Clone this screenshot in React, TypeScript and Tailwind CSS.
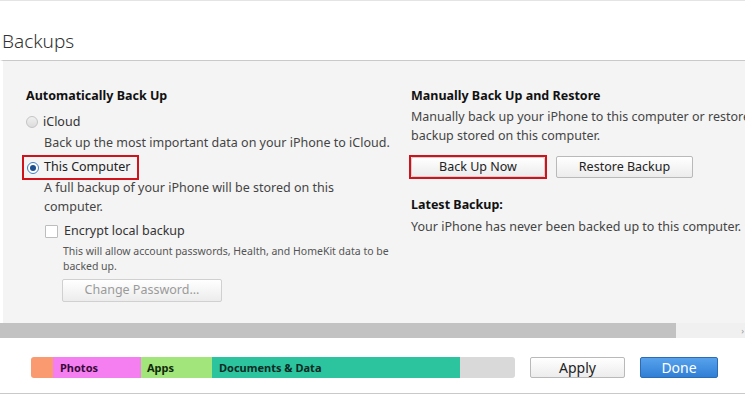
import React from 'react';

const font = { fontFamily: '"Noto Sans", "Open Sans", Arial, sans-serif' };

const Radio = ({ checked }: { checked?: boolean }) => (
  <span
    className={`inline-flex w-[12px] h-[12px] rounded-full border items-center justify-center ${
      checked ? 'border-[#3b7fc4] bg-white' : 'border-[#c4c4c4] bg-gradient-to-b from-[#f0f0f0] to-[#dcdcdc]'
    }`}
  >
    {checked && <span className="w-[6px] h-[6px] rounded-full bg-[#1c4f8f]" />}
  </span>
);

const Btn = ({ label, dim, className = '' }: { label: string; dim?: boolean; className?: string }) => (
  <div
    className={`flex items-center justify-center border rounded-[2px] bg-gradient-to-b from-[#ffffff] to-[#ececec] text-[12.5px] ${
      dim ? 'text-[#9a9a9a] border-[#d0d0d0]' : 'text-[#222] border-[#b9b9b9]'
    } ${className}`}
  >
    {label}
  </div>
);

export default function App() {
  return (
    <div className="w-[745px] h-[394px] bg-white overflow-hidden flex flex-col border-t border-[#e4e4e4]" style={font}>
      {/* title */}
      <div className="h-[59px] pl-[2px] pt-[28px] text-[19px] leading-[24px] text-[#333] font-light">Backups</div>

      {/* panel */}
      <div className="h-[263px] bg-[#f4f4f4] border-t border-[#c9c9c9] border-l-[3px] border-l-white flex text-[12.5px] text-[#444] whitespace-nowrap">
        <div className="w-[382px] shrink-0 pl-[23px] pt-[27px] flex flex-col">
          <div className="font-bold text-[#111] leading-[16px]">Automatically Back Up</div>
          <div className="flex items-center gap-[5px] mt-[10px] h-[16px]">
            <Radio />
            <span className="text-[#333]">iCloud</span>
          </div>
          <div className="pl-[18px] mt-[4px] leading-[18px]">Back up the most important data on your iPhone to iCloud.</div>
          <div className="mt-[3px] -ml-[4px] w-[117px] h-[25px] border-2 border-[#d0121b] flex items-center gap-[5px] pl-[3px]">
            <Radio checked />
            <span className="text-[#222]">This Computer</span>
          </div>
          <div className="pl-[18px] -mt-[2px] leading-[19px]">
            A full backup of your iPhone will be stored on this
            <br />
            computer.
          </div>
          <div className="flex items-center gap-[6px] pl-[19px] mt-[8px] h-[14px]">
            <span className="w-[13px] h-[13px] border border-[#bdbdbd] bg-white rounded-[1px]" />
            <span className="text-[#333]">Encrypt local backup</span>
          </div>
          <div className="pl-[37px] mt-[6px] text-[10.5px] leading-[15px] text-[#555]">
            This will allow account passwords, Health, and HomeKit data to be
            <br />
            backed up.
          </div>
          <Btn label="Change Password..." dim className="ml-[36px] mt-[5px] w-[160px] h-[23px]" />
        </div>

        <div className="pl-[26px] pt-[27px] flex flex-col">
          <div className="font-bold text-[#111] leading-[16px]">Manually Back Up and Restore</div>
          <div className="mt-[3px] leading-[19px]">
            Manually back up your iPhone to this computer or restore a
            <br />
            backup stored on this computer.
          </div>
          <div className="flex items-center mt-[10px] -ml-[2px]">
            <div className="border-2 border-[#d0121b] h-[24px] w-[138px] flex">
              <Btn label="Back Up Now" className="flex-1 border-[#cfcfcf]" />
            </div>
            <Btn label="Restore Backup" className="ml-[9px] w-[137px] h-[22px]" />
          </div>
          <div className="font-bold text-[#111] mt-[18px] leading-[16px]">Latest Backup:</div>
          <div className="mt-[5px] leading-[18px]">Your iPhone has never been backed up to this computer.</div>
        </div>
      </div>

      {/* scrollbar */}
      <div className="h-[15px] flex bg-[#f0f0f0]">
        <div className="w-[676px] h-full bg-[#c2c2c2]" />
        <div className="flex-1 flex items-center justify-end pr-[1px] text-[9px] text-[#999]">›</div>
      </div>

      {/* bottom bar */}
      <div className="flex-1 flex items-start pt-[19px] border-b border-[#c9c9c9]">
        <div className="ml-[31px] w-[484px] h-[21px] flex rounded-[3px] overflow-hidden text-[11px] font-bold leading-[21px]">
          <div className="w-[22px] bg-[#f99a70]" />
          <div className="w-[88px] bg-[#f57ff0] pl-[7px] text-[#3a0a3a]">Photos</div>
          <div className="w-[71px] bg-[#a2e57a] pl-[6px] text-[#0f2a0a]">Apps</div>
          <div className="w-[248px] bg-[#2bc49e] pl-[7px] text-[#0b2a24]">Documents &amp; Data</div>
          <div className="flex-1 bg-[#d9d9d9]" />
        </div>
        <Btn label="Apply" className="ml-[15px] w-[95px] h-[21px] !text-[14px] border-[#a9a9a9]" />
        <div className="ml-[15px] w-[78px] h-[21px] rounded-[2px] border border-[#2b6cb5] bg-gradient-to-b from-[#58a2ec] to-[#2f7fd6] text-white text-[14px] flex items-center justify-center">
          Done
        </div>
      </div>
    </div>
  );
}
